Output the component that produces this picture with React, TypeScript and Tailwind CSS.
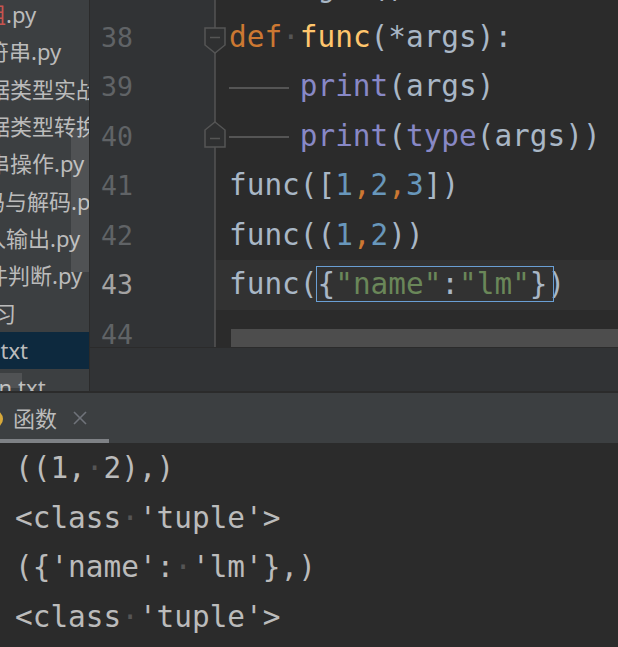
import React from "react";

const mono = { fontFamily: '"DejaVu Sans Mono", "Liberation Mono", monospace' };
const cjk = { fontFamily: '"Noto Sans", "Noto Sans CJK SC", sans-serif' };

// 项目树（左侧被横向滚动裁掉一部分）
const files = [
  { name: "元组", ext: ".py", ml: "-ml-[38px]", red: true },
  { name: "字符串", ext: ".py", ml: "-ml-[35px]" },
  { name: "数据类型实战", ext: ".py", ml: "-ml-[34px]" },
  { name: "数据类型转换", ext: ".py", ml: "-ml-[34px]" },
  { name: "字符串操作", ext: ".py", ml: "-ml-[56px]" },
  { name: "编码与解码", ext: ".py", ml: "-ml-[39px]" },
  { name: "输入输出", ext: ".py", ml: "-ml-[38px]" },
  { name: "条件判断", ext: ".py", ml: "-ml-[36px]" },
  { name: "练习", ext: "", ml: "-ml-[28px]" },
  { name: "1", ext: ".txt", ml: "-ml-[18px]", selected: true },
  { name: "main", ext: ".txt", ml: "-ml-[40px]" },
];

const Dot = () => <span className="text-[#555555]">·</span>;

const Indent = () => (
  <span className="relative inline-block w-[4ch]">
    {"    "}
    <span className="absolute left-0 top-1/2 h-[2px] w-[60px] bg-[#555555]" />
  </span>
);

const P = ({ c }: { c: string }) => <span className="text-[#a9b7c6]">{c}</span>;
const N = ({ c }: { c: string }) => <span className="text-[#6897bb]">{c}</span>;
const C = () => <span className="text-[#cc7832]">,</span>;
const B = ({ c }: { c: string }) => <span className="text-[#8888c6]">{c}</span>;
const S = ({ c }: { c: string }) => <span className="text-[#6a8759]">{c}</span>;

const codeLines: { n: number; body: React.ReactNode; current?: boolean }[] = [
  { n: 37, body: <span className="text-[#a9b7c6]">{"     g  ()"}</span> },
  {
    n: 38,
    body: (
      <>
        <span className="text-[#cc7832]">def</span>
        <Dot />
        <span className="text-[#ffc66d]">func</span>
        <P c="(*args):" />
      </>
    ),
  },
  {
    n: 39,
    body: (
      <>
        <Indent />
        <B c="print" />
        <P c="(args)" />
      </>
    ),
  },
  {
    n: 40,
    body: (
      <>
        <Indent />
        <B c="print" />
        <P c="(" />
        <B c="type" />
        <P c="(args))" />
      </>
    ),
  },
  {
    n: 41,
    body: (
      <>
        <P c="func([" />
        <N c="1" />
        <C />
        <N c="2" />
        <C />
        <N c="3" />
        <P c="])" />
      </>
    ),
  },
  {
    n: 42,
    body: (
      <>
        <P c="func((" />
        <N c="1" />
        <C />
        <N c="2" />
        <P c="))" />
      </>
    ),
  },
  {
    n: 43,
    current: true,
    body: (
      <>
        <P c="func(" />
        <span className="outline outline-1 outline-[#6a9fd4] pr-[5px] -mr-[5px]">
          <P c="{" />
          <S c={'"name"'} />
          <P c=":" />
          <S c={'"lm"'} />
          <P c="}" />
        </span>
        <P c=")" />
      </>
    ),
  },
  { n: 44, body: null },
];

const output = [
  <>
    ((1,<Dot />2),)
  </>,
  <>
    &lt;class<Dot />'tuple'&gt;
  </>,
  <>
    ({"{"}'name':<Dot />'lm'{"}"},)
  </>,
  <>
    &lt;class<Dot />'tuple'&gt;
  </>,
];

export default function App() {
  return (
    <div className="w-[618px] h-[647px] flex flex-col overflow-hidden bg-[#2b2b2b]">
      {/* 上半部分：项目树 + 编辑器 */}
      <div className="h-[391px] flex shrink-0">
        <div className="relative w-[90px] shrink-0 overflow-hidden bg-[#3c3f41] border-r border-[#2b2b2b]" style={cjk}>
          <div className="-mt-[4px]">
            {files.map((f) => (
              <div
                key={f.name + f.ext}
                className={`h-[37.3px] flex items-center whitespace-nowrap text-[22px] text-[#bbbbbb] ${f.selected ? "bg-[#0d293e]" : ""}`}
              >
                <span className={`${f.ml} ${f.red ? "text-[#c75450]" : ""}`}>{f.name}</span>
                <span>{f.ext}</span>
              </div>
            ))}
          </div>
          <div className="absolute left-[71px] top-[128px] w-[18px] h-[144px] bg-white/10" />
          <div className="absolute left-0 top-[373px] w-[22px] h-[15px] bg-white/10" />
        </div>

        <div className="flex-1 flex flex-col min-w-0">
          <div className="h-[347px] flex shrink-0 overflow-hidden">
            <div className="relative w-[125px] shrink-0 bg-[#313335]" style={mono}>
              <div className="-mt-[37px] pl-[11px]">
                {codeLines.map((l) => (
                  <div
                    key={l.n}
                    className={`h-[49.5px] leading-[49.5px] text-[26.5px] ${l.current ? "text-[#a4a3a3]" : "text-[#606366]"}`}
                  >
                    {l.n}
                  </div>
                ))}
              </div>
              <svg className="absolute left-[113px] top-0 z-10" width="24" height="347" viewBox="0 0 24 347" fill="none" stroke="#555555" strokeWidth="1.5">
                <line x1="12" y1="0" x2="12" y2="28" />
                <path d="M2 28 H22 V45 L12 53 L2 45 Z" fill="#2f3031" />
                <line x1="7" y1="37.5" x2="17" y2="37.5" />
                <line x1="12" y1="53" x2="12" y2="122" />
                <path d="M12 122 L22 130 V147 H2 V130 Z" fill="#2f3031" />
                <line x1="7" y1="138.5" x2="17" y2="138.5" />
                <line x1="12" y1="147" x2="12" y2="347" />
              </svg>
            </div>
            <div className="relative flex-1 min-w-0 bg-[#2b2b2b]" style={mono}>
              <div className="-mt-[37px]">
                {codeLines.map((l) => (
                  <div
                    key={l.n}
                    className={`h-[49.5px] leading-[49.5px] pl-[14px] text-[29.4px] whitespace-pre ${l.current ? "bg-[#323232]" : ""}`}
                  >
                    {l.body}
                  </div>
                ))}
              </div>
              <div className="absolute left-[16px] right-0 bottom-0 h-[18px] bg-[#4d4d4d]" />
            </div>
          </div>
          <div className="flex-1 bg-[#313335] border-t border-[#2b2b2b]" />
        </div>
      </div>

      <div className="h-[2px] shrink-0 bg-[#2b2b2b]" />

      {/* 运行窗口标签 */}
      <div className="h-[50px] shrink-0 bg-[#3c3f41] flex items-stretch">
        <div className="relative w-[109px] flex items-center overflow-hidden">
          <div className="absolute -left-[15px] top-[17px] w-[18px] h-[18px] rounded-full bg-[#d8a93a]" />
          <span className="ml-[13px] text-[22px] text-[#bbbbbb]" style={cjk}>
            函数
          </span>
          <svg className="ml-[16px]" width="14" height="14" viewBox="0 0 14 14" stroke="#6f737a" strokeWidth="1.6">
            <line x1="1" y1="1" x2="13" y2="13" />
            <line x1="13" y1="1" x2="1" y2="13" />
          </svg>
          <div className="absolute left-0 right-0 bottom-0 h-[4px] bg-[#7e8185]" />
        </div>
      </div>

      {/* 控制台输出 */}
      <div className="flex-1 bg-[#2b2b2b] pl-[15px] pt-[1px]" style={mono}>
        {output.map((o, i) => (
          <div key={i} className="h-[49.5px] leading-[49.5px] text-[29.4px] text-[#bbbbbb] whitespace-pre">
            {o}
          </div>
        ))}
      </div>
    </div>
  );
}
